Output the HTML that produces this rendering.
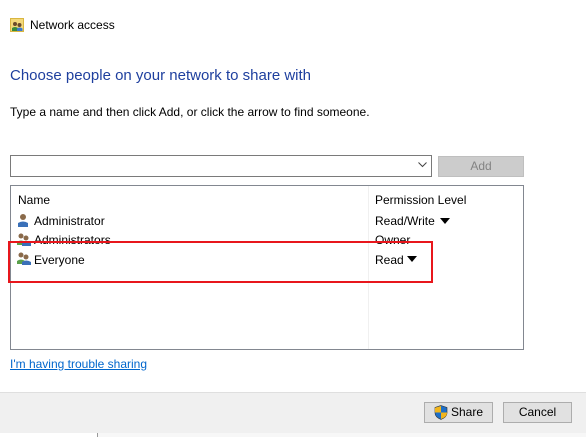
<!DOCTYPE html>
<html><head><style>
*{margin:0;padding:0;box-sizing:border-box}
body{width:586px;height:437px;position:relative;background:#fff;font-family:"Liberation Sans",sans-serif;font-size:12px;color:#000;overflow:hidden}
.a{position:absolute;white-space:nowrap}
</style></head><body>
<svg class="a" style="left:10px;top:18px" width="14" height="14" viewBox="0 0 14 14"><rect x="0.5" y="0.5" width="13" height="13" fill="#f3d87a" stroke="#d9b640"/><circle cx="5" cy="6" r="2" fill="#6b4a2a"/><path d="M2 13v-3q3-2 6 0v3z" fill="#3a8a3a"/><circle cx="9.5" cy="7" r="2" fill="#6b4a2a"/><path d="M7 13v-2.5q2.5-2 5.5 0V13z" fill="#3a7ad0"/></svg>
<div class="a" style="left:30px;top:18px;font-size:12px">Network access</div>
<div class="a" style="left:10px;top:67px;font-size:15px;color:#1e3f9e">Choose people on your network to share with</div>
<div class="a" style="left:10px;top:105px">Type a name and then click Add, or click the arrow to find someone.</div>
<div class="a" style="left:10px;top:155px;width:422px;height:22px;border:1px solid #7a7a7a"></div>
<svg class="a" style="left:418px;top:162px" width="9" height="6"><path d="M0.5 0.5L4.5 4.5L8.5 0.5" fill="none" stroke="#444"/></svg>
<div class="a" style="left:438px;top:156px;width:86px;height:21px;background:#ccc;border:1px solid #bfbfbf;color:#838383;text-align:center;line-height:19px">Add</div>
<div class="a" style="left:10px;top:185px;width:514px;height:165px;border:1px solid #828790"></div>
<div class="a" style="left:368px;top:186px;width:1px;height:163px;background:#f0f0f0"></div>
<div class="a" style="left:18px;top:193px">Name</div>
<div class="a" style="left:375px;top:193px">Permission Level</div>
<svg class="a" style="left:17px;top:213px" width="12" height="14"><circle cx="6" cy="4" r="3" fill="#8a6a4a"/><path d="M1 14v-4q5-3 10 0v4z" fill="#3a70b8"/></svg>
<div class="a" style="left:34px;top:214px">Administrator</div>
<div class="a" style="left:375px;top:214px">Read/Write</div>
<svg class="a" style="left:440px;top:218px" width="10" height="6"><path d="M0 0h10L5 6z"/></svg>
<svg class="a" style="left:16px;top:232px" width="16" height="14"><circle cx="5" cy="4" r="2.5" fill="#8a6a4a"/><path d="M1 13v-3q4-3 8 0v3z" fill="#5aa04a"/><circle cx="10" cy="6" r="2.5" fill="#8a6a4a"/><path d="M6 14v-3q4-3 9 0v3z" fill="#3a70b8"/></svg>
<div class="a" style="left:34px;top:233px">Administrators</div>
<div class="a" style="left:375px;top:233px">Owner</div>
<svg class="a" style="left:16px;top:251px" width="16" height="14"><circle cx="5" cy="4" r="2.5" fill="#8a6a4a"/><path d="M1 13v-3q4-3 8 0v3z" fill="#5aa04a"/><circle cx="10" cy="6" r="2.5" fill="#8a6a4a"/><path d="M6 14v-3q4-3 9 0v3z" fill="#3a70b8"/></svg>
<div class="a" style="left:34px;top:253px">Everyone</div>
<div class="a" style="left:375px;top:253px">Read</div>
<svg class="a" style="left:407px;top:256px" width="10" height="6"><path d="M0 0h10L5 6z"/></svg>
<div class="a" style="left:8px;top:241px;width:425px;height:42px;border:2px solid #e8161c"></div>
<div class="a" style="left:10px;top:357px;color:#0066cc;text-decoration:underline">I'm having trouble sharing</div>
<div class="a" style="left:0;top:392px;width:586px;height:42px;background:#f0f0f0;border-top:1px solid #dfdfdf"></div>
<div class="a" style="left:0;top:433px;width:97px;height:4px;background:#fff"></div>
<div class="a" style="left:97px;top:433px;width:1px;height:4px;background:#999"></div>
<div class="a" style="left:98px;top:433px;width:488px;height:4px;background:#f7f7f7"></div>
<div class="a" style="left:424px;top:402px;width:69px;height:21px;background:#e1e1e1;border:1px solid #adadad;line-height:19px;padding-left:26px">Share</div>
<svg class="a" style="left:434px;top:405px" width="14" height="15" viewBox="0 0 14 15"><path d="M7 0.5L13 2.5V8Q13 12 7 14.5Q1 12 1 8V2.5z" fill="#1e6fc8" stroke="#333" stroke-width="0.6"/><path d="M7 1V7.5H13V8Q13 12 7 14V7.5H1V2.8z" fill="#f2b51c"/></svg>
<div class="a" style="left:503px;top:402px;width:69px;height:21px;background:#e1e1e1;border:1px solid #adadad;line-height:19px;text-align:center">Cancel</div>
</body></html>
